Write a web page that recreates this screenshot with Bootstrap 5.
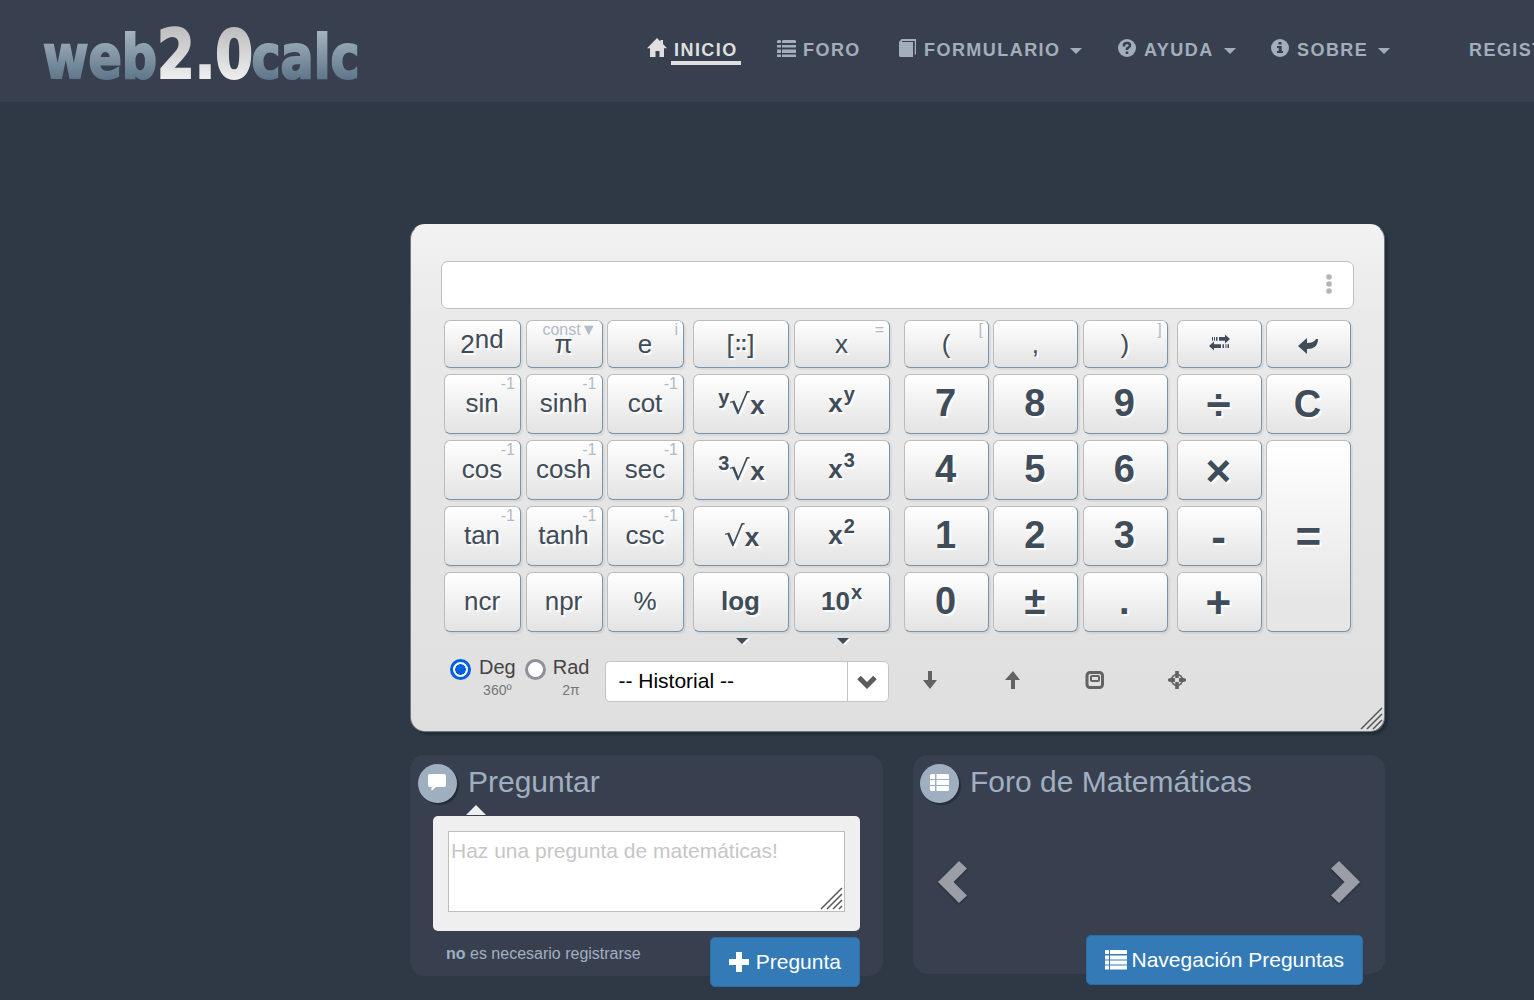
<!DOCTYPE html>
<html lang="es">
<head>
<meta charset="utf-8">
<meta name="viewport" content="width=device-width, initial-scale=1">
<title>web2.0calc</title>
<link href="https://cdn.jsdelivr.net/npm/bootstrap@5.3.0/dist/css/bootstrap.min.css" rel="stylesheet">
<style>
html, body { height: 1000px; overflow: hidden; }
body { background: #2f3945; font-family: "Liberation Sans", Arial, sans-serif; color: #3f4c59; }
svg { display: block; flex: none; }
.topbar { height: 102px; background: #38404f; padding: 0 0 0 40px; overflow: hidden; }
.logo { width: 607px; height: 102px; }
.menu { color: #a2aebb; font-weight: 700; font-size: 18px; letter-spacing: 1.45px; line-height: 22px; padding-top: 39px; }
.menu a { color: inherit; text-decoration: none; white-space: nowrap; }
.menu a.on { color: #dfdfdf; }
.menu .ico { width: 26px; }
.menu .ico.slim { width: 25px; }
.menu .ico svg { margin-top: -1px; }
.menu .on .lbl { border-bottom: 4px solid #dfdfdf; padding: 0 3px 0 3px; margin-left: -2px; height: 26px; }
.menu .lbl { height: 26px; }
.w1 { width: 130px; } .w2 { width: 122px; } .w3 { width: 219px; } .w4 { width: 153px; } .w5 { width: 198px; }
.tri { border: 6px solid transparent; border-top-color: currentColor; border-bottom: 0; width: 0; height: 0; margin: 9px 0 0 10px; }
.wrap { width: 975px; margin: 122px 0 0 410px; }
.calc { height: 508px; border: 1px solid #6f7882; border-top-color: #f2f2f2; border-radius: 15px; padding: 36px 30px 0; position: relative;
  background: linear-gradient(#f2f2f2, #eaeaea 18%, #dfdfdf); box-shadow: 3px 3px 2px #242d37; }
.screen { height: 48px; border: 1px solid #bfbfbf; border-radius: 7px; background: #fff; padding-right: 21px; padding-bottom: 3px; }
.keys { margin: 11px 0 0 3px; }
.grp { display: grid; grid-template-rows: 48px repeat(4, 60px); row-gap: 6px; }
.g1 { grid-template-columns: repeat(3, 77px); column-gap: 4.5px; margin-right: 9px; }
.g2 { grid-template-columns: repeat(2, 96px); column-gap: 5px; margin-right: 14px; }
.g3 { grid-template-columns: repeat(3, 85px); column-gap: 4.4px; margin-right: 9.2px; }
.g4 { grid-template-columns: repeat(2, 85px); column-gap: 4px; }
.key { position: relative; border: 1px solid; border-color: #bcbcbc #7595ac #7595ac #bcbcbc; border-radius: 6px; padding: 0 1px 2px 0; font: 26px/1 "Liberation Sans", sans-serif;
  color: #3f4c59; text-shadow: 2px 2px 1px #fff; background: linear-gradient(#fff, #e3e3e3); box-shadow: 2px 2px 1px rgba(0,0,0,.06); white-space: nowrap;
  display: flex; align-items: center; justify-content: center; }
.key.t { padding-bottom: 0; }
.g2 .key.b, .num { font-weight: 700; }
.key.num { font-size: 38px; padding-right: 2px; }
.key.cl { padding-bottom: 0; }
.key.op { font-size: 44px; font-weight: 700; padding: 1px 2px 0 0; }
.key.eq { grid-row: 3 / 6; grid-column: 2; background: linear-gradient(#fff, #e6e6e6 85%); padding-right: 0; }
.up { font-size: 20px; transform: translateY(-9px); margin-left: 1px; }
.key.root { padding: 2px 0 0 1px; }
.up.lead-in { margin: 0; transform: translateY(-8px); }
.nd { transform: translateY(-5px); }
.sq { margin-right: -1px; width: 21px; overflow: hidden; }
.rad { display: inline-block; font-family: "DejaVu Sans", sans-serif; font-weight: 400; font-size: 28px; transform: scaleX(1.15); transform-origin: 0 50%; width: 21px; text-align: left; }
.mdots { letter-spacing: -1px; font-weight: 700; font-size: 20px; transform: translateY(-1px); margin: 0 1px; }
.hint { position: absolute; right: 5px; top: 0; font-size: 16px; line-height: 17px; color: #b0bcc7; text-shadow: none; font-weight: 400; }
.foot { height: 70px; color: #444; }
.more { height: 6px; }
.dot-r { width: 21px; height: 21px; border-radius: 50%; border: 3px solid #8f8f9d; background: #fff; margin-top: 5px; }
.dot-r.sel { border-color: #0060df; background: radial-gradient(circle, #0060df 5px, #fff 5.6px); }
.ang { font-size: 20px; line-height: 24px; }
.ang span { display: block; font-size: 14px; line-height: 20px; margin-top: 1px; color: #777; }
.hist { width: 284px; height: 41px; background: #fff; border: 1px solid #c4c4c4; border-radius: 5px; font-size: 21px; color: #000; }
.hist .arrow { width: 41px; border-left: 1px solid #c4c4c4; }
.grip { position: absolute; right: 1px; bottom: 1px; }
.panel { height: 221px; background: #38404f; border-radius: 15px; }
.disc { width: 39px; height: 39px; border-radius: 50%; background: #a0afc0; box-shadow: 2px 2px 1px #252e38; margin-top: 9px; }
.ttl { font-size: 30px; line-height: 36px; color: #a0afc0; margin: 9px 0 0 11px; font-weight: 400; }
.bubble { margin: 13px 23px 0; height: 115px; background: #efefef; border-radius: 5px; padding: 15px; position: relative; }
.bubble::before { content: ""; position: absolute; left: 33px; top: -11px; border: 10px solid transparent; border-top: 0; border-bottom-color: #efefef; }
.box { height: 81px; border: 1px solid #bdbdbd; background: #fff; position: relative; font-size: 21px; line-height: 24px; color: #c6c6c6; padding: 7px 2px; }
.note { font-size: 16px; color: #a0afc0; line-height: 20px; padding-top: 7px; }
.go { --bs-btn-bg: #337ab7; --bs-btn-border-color: #2e6da4; --bs-btn-color: #fff; font-size: 21px; height: 50px; border-radius: 5px; padding: 0 18px; white-space: nowrap; }
.chev { height: 132px; padding: 26px 25px 0; }
</style>
<script src="https://cdn.jsdelivr.net/npm/bootstrap@5.3.0/dist/js/bootstrap.bundle.min.js"></script>
</head>
<body>
<header class="topbar d-flex">
  <svg class="logo" viewBox="0 0 607 102" font-family="DejaVu Sans Condensed, DejaVu Sans, sans-serif" font-weight="700">
    <defs>
      <linearGradient id="ga" gradientUnits="userSpaceOnUse" x1="0" y1="28" x2="0" y2="80"><stop offset="0" stop-color="#a9b9c4"/><stop offset="1" stop-color="#5e7589"/></linearGradient>
      <linearGradient id="gb" gradientUnits="userSpaceOnUse" x1="0" y1="26" x2="0" y2="80"><stop offset="0" stop-color="#bcbcbc"/><stop offset="1" stop-color="#efefef"/></linearGradient>
    </defs>
    <g stroke-width="2" stroke-linejoin="miter">
    <text x="3" y="77.500" font-size="61" fill="url(#ga)" stroke="url(#ga)" textLength="114" lengthAdjust="spacingAndGlyphs">web</text>
    <text x="211.500" y="77.500" font-size="61" fill="url(#ga)" stroke="url(#ga)" textLength="108" lengthAdjust="spacingAndGlyphs">calc</text>
    <text x="117" y="77.500" font-size="68" fill="url(#gb)" stroke="url(#gb)" textLength="96" lengthAdjust="spacingAndGlyphs">2.0</text>
    </g>
  </svg>
  <nav class="menu d-flex">
    <a href="#" class="on d-flex w1"><span class="ico"><svg width="20" height="20" viewBox="0 0 20 20" fill="currentColor"><path d="M10 0l3.500 3.600V2h2.500v4l4 4.300h-3V19h-4.500v-6h-4v6H3v-8.700H0z"/></svg></span><span class="lbl">INICIO</span></a>
    <a href="#" class="d-flex w2"><span class="ico"><svg width="19" height="20" viewBox="0 0 19 20" fill="currentColor"><path d="M1 2h2.500l.5 1v2H0V3zM6 2h12l1 1v2H5V3zM0 7h4v2.500H0zM5 7h14v2.500H5zM0 11.500h4V15H0zM5 11.500h14V15H5zM0 16.500h4V19H0zM5 16.500h14V19H5z"/></svg></span><span class="lbl">FORO</span></a>
    <a href="#" class="d-flex w3"><span class="ico slim"><svg width="18" height="20" viewBox="0 0 18 20" fill="currentColor"><path d="M0 4l2.500-3H17v15l-1.300 1V3H3.500L2.800 4H14v15H1l-1-1z"/></svg></span><span class="lbl">FORMULARIO</span><i class="tri"></i></a>
    <a href="#" class="d-flex w4"><span class="ico"><svg width="18" height="20" viewBox="0 0 18 20"><circle cx="9" cy="10" r="9" fill="currentColor"/><path d="M6 8.500V7q0-2 3-2t3 2.300Q12 9 10.500 9.600L9 10.500V12M9 13.500V16" fill="none" stroke="#38404f" stroke-width="2.600"/></svg></span><span class="lbl">AYUDA</span><i class="tri"></i></a>
    <a href="#" class="d-flex w5"><span class="ico"><svg width="18" height="20" viewBox="0 0 18 20"><circle cx="9" cy="10" r="9" fill="currentColor"/><path d="M7.500 4h3v2.500h-3zM6 8h4.700v5H12v2H6v-2h1.700v-3H6z" fill="#38404f"/></svg></span><span class="lbl">SOBRE</span><i class="tri"></i></a>
    <a href="#">REGISTRARSE</a>
  </nav>
</header>

<main class="wrap">
  <section class="calc">
    <div class="screen d-flex align-items-center justify-content-end">
      <svg width="6" height="20" viewBox="0 0 6 20" fill="#b5b5b5"><circle cx="3" cy="3" r="2.800"/><circle cx="3" cy="10" r="2.800"/><circle cx="3" cy="17" r="2.800"/></svg>
    </div>
    <div class="keys d-flex">
      <div class="grp g1">
        <button class="key t">2<span class="nd">nd</span></button><button class="key t">π<span class="hint">const▼</span></button><button class="key t">e<span class="hint">i</span></button>
        <button class="key">sin<span class="hint">-1</span></button><button class="key">sinh<span class="hint">-1</span></button><button class="key">cot<span class="hint">-1</span></button>
        <button class="key">cos<span class="hint">-1</span></button><button class="key">cosh<span class="hint">-1</span></button><button class="key">sec<span class="hint">-1</span></button>
        <button class="key">tan<span class="hint">-1</span></button><button class="key">tanh<span class="hint">-1</span></button><button class="key">csc<span class="hint">-1</span></button>
        <button class="key">ncr</button><button class="key">npr</button><button class="key">%</button>
      </div>
      <div class="grp g2">
        <button class="key t">[<span class="mdots">::</span>]</button><button class="key t">x<span class="hint">=</span></button>
        <button class="key b root"><span class="up lead-in">y</span><span class="rad">√</span>x</button><button class="key b">x<span class="up">y</span></button>
        <button class="key b root"><span class="up lead-in">3</span><span class="rad">√</span>x</button><button class="key b">x<span class="up">3</span></button>
        <button class="key b root"><span class="rad">√</span>x</button><button class="key b">x<span class="up">2</span></button>
        <button class="key b">log</button><button class="key b">10<span class="up">x</span></button>
      </div>
      <div class="grp g3">
        <button class="key t">(<span class="hint">[</span></button><button class="key t">,</button><button class="key t">)<span class="hint">]</span></button>
        <button class="key num">7</button><button class="key num">8</button><button class="key num">9</button>
        <button class="key num">4</button><button class="key num">5</button><button class="key num">6</button>
        <button class="key num">1</button><button class="key num">2</button><button class="key num">3</button>
        <button class="key num">0</button><button class="key num">±</button><button class="key num">.</button>
      </div>
      <div class="grp g4">
        <button class="key"><svg width="22" height="20" viewBox="0 0 22 20" fill="currentColor"><path d="M3 4h1v4H3zM5 4h1v4H5zM7 4h1.500v4H7zM10 4h6V1l5 5-5 5V8h-6zM0 14l5-5v3h7v4H5v3zM13.500 12H15v4h-1.500zM16.500 12h1v4h-1zM18.500 12h1.500v4h-1.500z" transform="translate(1 .5) scale(1 .9)"/></svg></button>
        <button class="key"><svg width="20" height="16" viewBox="0 0 20 16" fill="currentColor" style="margin-top:5px"><path d="M0 8l9-8v5q7 0 9-4h2q0 10-11 10v5z"/></svg></button>
        <button class="key op">÷</button><button class="key num cl">C</button>
        <button class="key op">×</button><button class="key op eq">=</button>
        <button class="key op">-</button>
        <button class="key op">+</button>
      </div>
    </div>
    <div class="more d-flex"><svg width="460" height="14" viewBox="0 0 460 14"><path d="M295 6h12l-6 6zM396 6h12l-6 6z" transform="translate(2 1)" fill="#fff"/><path d="M295 6h12l-6 6zM396 6h12l-6 6z" fill="#3f4c59"/></svg></div>
    <div class="foot d-flex">
      <div class="dot-r sel" style="margin-left:9px;margin-top:21px"></div>
      <div class="ang text-center" style="margin:17px 0 0 8px">Deg<span>360º</span></div>
      <div class="dot-r" style="margin-left:9px;margin-top:21px"></div>
      <div class="ang text-center" style="margin:17px 0 0 7px">Rad<span>2π</span></div>
      <div class="hist d-flex" style="margin:23px 0 0 16px"><span class="flex-grow-1 d-flex align-items-center" style="padding:0 0 2px 12px">-- Historial --</span>
        <span class="arrow d-flex align-items-center justify-content-center" style="padding-right:3px"><svg width="20" height="14" viewBox="0 0 20 14"><path d="M2 2.500l8 8 8-8" fill="none" stroke="#5c5c5c" stroke-width="5"/></svg></span></div>
      <svg width="270" height="20" viewBox="0 0 270 20" fill="#636363" style="margin:32px 0 0 33px">
        <path d="M6 1h4v9h5l-7 9-7-9h5z"/>
        <path d="M89 19h4v-9h5l-7-9-8 9h6z"/>
        <rect x="165" y="2.500" width="15.500" height="15" rx="3" fill="none" stroke="#636363" stroke-width="3"/><rect x="169" y="6" width="8" height="5" rx="1" fill="none" stroke="#636363" stroke-width="2"/>
        <circle cx="255" cy="10" r="5.500" fill="none" stroke="#636363" stroke-width="1.500"/><path d="M253.200 1h3.600v7h-3.600zM253.200 12h3.600v7h-3.600zM246 9l2-1h5v4h-5l-2-1zM264 9l-2-1h-5v4h5l2-1z"/>
      </svg>
    </div>
    <svg class="grip" width="23" height="23" viewBox="0 0 23 23"><path d="M1 22L22 1M7 22L22 7M13 22l9-9M19 22l3-3" stroke="#555" stroke-width="1.500"/></svg>
  </section>

  <section class="d-flex align-items-start" style="gap:30px;margin-top:23px">
    <div class="panel" style="width:473px">
      <div class="d-flex" style="padding-left:8px">
        <span class="disc d-flex justify-content-center" style="padding:10px 1px 0 0"><svg width="18" height="17" viewBox="0 0 18 17" fill="#fff"><path d="M2 0h14q2 0 2 2v9q0 2-2 2H8l-4.500 4V13H2q-2 0-2-2V2q0-2 2-2z"/></svg></span>
        <h2 class="ttl">Preguntar</h2>
      </div>
      <div class="bubble"><div class="box">Haz una pregunta de matemáticas!<svg class="grip" width="23" height="23" viewBox="0 0 23 23"><path d="M1 22L22 1M7 22L22 7M13 22l9-9M19 22l3-3" stroke="#555" stroke-width="1.500"/></svg></div></div>
      <div class="d-flex justify-content-between" style="margin:6px 23px 0 36px">
        <span class="note"><b>no</b> es necesario registrarse</span>
        <button class="btn go d-flex align-items-center"><svg style="margin-right:7px" width="20" height="20" viewBox="0 0 20 20" fill="#fff"><path d="M7 0h6v7h7v6h-7v7H7v-7H0V7h7z"/></svg>Pregunta</button>
      </div>
    </div>
    <div class="panel" style="width:472px;height:219px">
      <div class="d-flex" style="padding-left:7px">
        <span class="disc d-flex justify-content-center" style="padding-top:10px"><svg width="19" height="18" viewBox="0 0 19 18" fill="#fff"><path d="M1 0h4v5H0V1zM6.500 0H18l1 1v4H6.500zM0 6h5v5H0zM6.500 6H19v5H6.500zM0 12h5v5H1l-1-1zM6.500 12H19v4l-1 1H6.500z"/></svg></span>
        <h2 class="ttl">Foro de Matemáticas</h2>
      </div>
      <div class="chev d-flex justify-content-between align-items-center" style="filter:drop-shadow(0 1px 1px rgba(0,0,0,.4))">
        <svg width="29" height="42" viewBox="0 0 29 42" fill="#9b9ea7"><path d="M0 21L21 0l8 7.500L15.500 21 29 34.500 21 42z"/></svg>
        <svg width="29" height="42" viewBox="0 0 29 42" fill="#9b9ea7"><path d="M29 21L8 0 0 7.500 13.500 21 0 34.500 8 42z"/></svg>
      </div>
      <div class="d-flex justify-content-end" style="padding-right:22px">
        <button class="btn go d-flex align-items-center"><svg style="margin-right:5px" width="22" height="20" viewBox="0 0 22 20" fill="#fff"><path d="M0 0h4v4H0zM5 0h17v4H5zM0 5.500h4v4H0zM5 5.500h17v4H5zM0 10.500h4v4H0zM5 10.500h17v4H5zM0 15.500h4v4H0zM5 15.500h17v4H5z"/></svg>Navegación Preguntas</button>
      </div>
    </div>
  </section>
</main>
</body>
</html>
